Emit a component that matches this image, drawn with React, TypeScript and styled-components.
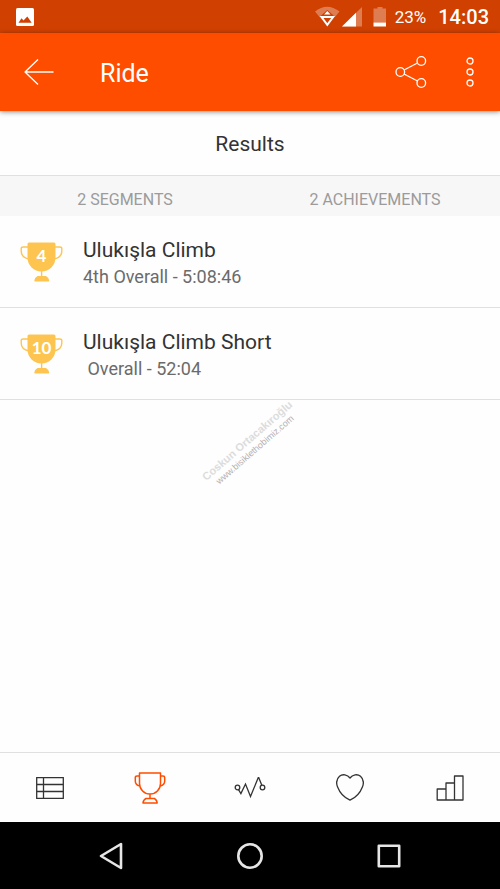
import React from "react";
import styled, { createGlobalStyle } from "styled-components";

const GlobalStyle = createGlobalStyle`
  *, *::before, *::after { box-sizing: border-box; }
  body { margin: 0; background: #fefefe; font-family: Roboto, "Liberation Sans", sans-serif; }
  h1, h2, h3, p, ul { margin: 0; padding: 0; font-weight: 400; }
  ul { list-style: none; }
  button { border: 0; padding: 0; background: none; font: inherit; color: inherit; cursor: pointer; }
  svg { display: block; flex: none; }
`;

const Screen = styled.div`
  display: flex;
  flex-direction: column;
  min-height: 100vh;
`;

const StatusBar = styled.div`
  display: flex;
  align-items: center;
  height: 33px;
  padding: 0 11px 0 16px;
  background: #d04000;
  color: #fff;
`;

const StatusIcons = styled.div`
  display: flex;
  align-items: center;
  margin-left: auto;
`;

const Battery = styled.span`
  margin-left: 8px;
  font-size: 17px;
  line-height: 20px;
`;

const Clock = styled.span`
  margin-left: 12px;
  font-size: 20px;
  font-weight: 500;
  line-height: 24px;
`;

const AppBar = styled.header`
  position: relative;
  display: flex;
  align-items: center;
  height: 78px;
  padding: 0 8px 0 17px;
  background: #ff4d00;
  color: #fff;
  box-shadow: 0 1px 5px rgba(0, 0, 0, 0.45);
`;

const BarButton = styled.button`
  display: flex;
  align-items: center;
  justify-content: center;
  width: 44px;
  height: 48px;
`;

const BarTitle = styled.h1`
  flex: 1;
  padding: 4px 0 0 39px;
  font-size: 25px;
  line-height: 32px;
`;

const BarActions = styled.div`
  display: flex;
  gap: 15px;
`;

const Content = styled.main`
  position: relative;
  flex: 1;
`;

const SectionTitle = styled.h2`
  height: 65px;
  border-bottom: 1px solid #e0e0e0;
  color: #333;
  font-size: 21px;
  line-height: 66px;
  text-align: center;
`;

const Summary = styled.div`
  display: grid;
  grid-template-columns: 1fr 1fr;
  height: 40px;
  background: #f7f7f7;
  color: #9b9b9b;
  font-size: 16px;
  line-height: 48px;
  text-align: center;
`;

const Row = styled.li`
  display: flex;
  align-items: flex-start;
  gap: 20px;
  padding: 20px 20px 18px;
  border-bottom: 1px solid #e0e0e0;
`;

const BadgeSlot = styled.div`
  padding-top: 6px;
`;

const RowTitle = styled.h3`
  color: #333;
  font-size: 21px;
  line-height: 28px;
`;

const RowDetail = styled.p`
  color: #6b6b6b;
  font-size: 18px;
  line-height: 25px;
  white-space: pre;
`;

const Watermark = styled.div`
  position: absolute;
  top: 333px;
  left: 50%;
  transform: translate(-50%, -50%) rotate(-41deg);
  text-align: center;
  white-space: nowrap;
  font-family: "Liberation Sans", sans-serif;
`;

const WatermarkName = styled.p`
  color: #dcdcdc;
  font-size: 11px;
  font-weight: 700;
  line-height: 16px;
`;

const WatermarkSite = styled.p`
  color: #b4b0b0;
  font-size: 9px;
  line-height: 9px;
`;

const TabBar = styled.nav`
  display: grid;
  grid-template-columns: repeat(5, 1fr);
  height: 70px;
  border-top: 1px solid #e0e0e0;
`;

const Tab = styled.button<{ $active?: boolean }>`
  display: flex;
  align-items: center;
  justify-content: center;
  color: ${(p) => (p.$active ? "#ff4d00" : "#333")};
`;

const SystemBar = styled.nav`
  display: flex;
  justify-content: center;
  gap: 91px;
  height: 67px;
  background: #000;
  color: #e6e6e6;
`;

const SystemButton = styled.button`
  display: flex;
  align-items: center;
  justify-content: center;
  width: 48px;
`;

const BadgeNumber = styled.text`
  fill: #fff;
  font-family: Lato, Roboto, sans-serif;
  font-size: 17px;
  font-weight: 700;
  text-anchor: middle;
`;

const Line = ({ w, h, stroke = 1.3, children }: { w: number; h: number; stroke?: number; children: React.ReactNode }) => (
  <svg width={w} height={h} viewBox={`0 0 ${w} ${h}`} fill="none" stroke="currentColor" strokeWidth={stroke} strokeLinejoin="round" aria-hidden="true">
    {children}
  </svg>
);

const TrophyBadge = ({ place }: { place: number }) => (
  <svg width="43" height="40" viewBox="0 0 43 40" role="img" aria-label={`Place ${place}`}>
    <path d="M8 5H3.2Q1.2 5 1.2 6.500V9Q1.200 15.500 9 17M35 5h4.800q2 0 2 1.500V9Q41.800 15.500 34 17" fill="none" stroke="#fdc550" strokeWidth="1.400" />
    <path d="M9 .5h25q1.500 0 1.500 1.500v13.500a14 14 0 0 1-28 0V2q0-1.500 1.500-1.500Z" fill="#fdc550" />
    <path d="M20.900 28h1.400v6h-1.400Z" fill="#fdc550" />
    <path d="M17.500 34h8.500q3 1.500 3.200 4.500.1 1-1 1H15.300q-1.100 0-1-1 .2-3 3.200-4.500Z" fill="#fdc550" />
    <BadgeNumber x="21.500" y="19.500">{place}</BadgeNumber>
  </svg>
);

const results = [
  { place: 4, title: "Ulukışla Climb", detail: "4th Overall - 5:08:46" },
  { place: 10, title: "Ulukışla Climb Short", detail: " Overall - 52:04" },
];

export default function App() {
  return (
    <>
      <GlobalStyle />
      <Screen>
        <StatusBar>
          <svg width="18" height="18" viewBox="0 0 18 18" aria-hidden="true">
            <rect width="18" height="18" rx="1.500" fill="#fff" />
            <path d="M2.500 14.700 5.500 10.300 7.500 12.500 11.300 8.500 15.700 14.700Z" fill="#d04000" />
          </svg>
          <StatusIcons>
            <svg width="72" height="22" viewBox="0 0 72 22" aria-hidden="true">
              <path d="M0 5.500Q12 -4 24.500 5.500L12.300 20.500Z" fill="#fff" opacity=".32" />
              <path d="m12.300 4 8 7-8 10-8-10Z" fill="#d04000" />
              <path d="M12.300 5 15.500 8.500H9.100Z" fill="#fff" />
              <path d="M6.500 11h11.600L12.300 18.800Z" fill="none" stroke="#fff" strokeWidth="2" />
              <path d="M47 1v19.500H27Z" fill="#fff" opacity=".32" />
              <path d="M41 6.800v13.700H27Z" fill="#fff" />
              <path d="M62.500 1h5v1.500H71v14H58.500v-14h4Z" fill="#fff" opacity=".32" />
              <path d="M58.500 16.500H71v4H58.500Z" fill="#fff" />
            </svg>
            <Battery>23%</Battery>
            <Clock>14:03</Clock>
          </StatusIcons>
        </StatusBar>
        <AppBar>
          <BarButton aria-label="Back">
            <Line w={30} h={28}><path d="M29.500 14H1M14 1.500 1 14l13 12.500" /></Line>
          </BarButton>
          <BarTitle>Ride</BarTitle>
          <BarActions>
            <BarButton aria-label="Share">
              <Line w={32} h={34}>
                <circle cx="5.300" cy="17" r="4.300" />
                <circle cx="26.300" cy="6" r="4.300" />
                <circle cx="26.300" cy="28" r="4.300" />
                <path d="m9 15 13.500-7M9 19l13.500 7" />
              </Line>
            </BarButton>
            <BarButton aria-label="More options">
              <Line w={8} h={30} stroke={1.3}>
                <circle cx="4" cy="4" r="3" />
                <circle cx="4" cy="15" r="3" />
                <circle cx="4" cy="26" r="3" />
              </Line>
            </BarButton>
          </BarActions>
        </AppBar>
        <Content>
          <SectionTitle>Results</SectionTitle>
          <Summary>
            <span>2 SEGMENTS</span>
            <span>2 ACHIEVEMENTS</span>
          </Summary>
          <ul>
            {results.map((r) => (
              <Row key={r.place}>
                <BadgeSlot>
                  <TrophyBadge place={r.place} />
                </BadgeSlot>
                <div>
                  <RowTitle>{r.title}</RowTitle>
                  <RowDetail>{r.detail}</RowDetail>
                </div>
              </Row>
            ))}
          </ul>
          <Watermark>
            <WatermarkName>Coskun Ortacakıroğlu</WatermarkName>
            <WatermarkSite>www.bisiklethobimiz.com</WatermarkSite>
          </Watermark>
        </Content>
        <TabBar aria-label="Activity sections">
          <Tab aria-label="Splits">
            <Line w={28} h={22}><path d="M.7.500h26.600v21H.7ZM.7 7.500h26.600M.7 14.500h26.600M7.500.500v21" /></Line>
          </Tab>
          <Tab $active aria-label="Results" aria-current="page">
            <Line w={32} h={32} stroke={1.5}>
              <path d="M5.500 1h21v10.500a10.500 10.500 0 0 1-21 0ZM5.500 4H3Q1.300 4 1.300 5.500V9Q1.300 13 5.800 14M26.500 4H29q1.700 0 1.700 1.500V9q0 4-4.500 5M16 22v4.500M12 26.500h8.500q2.500 1.500 2.700 4.500H9q.2-3 3-4.500Z" />
            </Line>
          </Tab>
          <Tab aria-label="Analysis">
            <Line w={32} h={22}>
              <circle cx="3.500" cy="10.500" r="2.300" />
              <circle cx="28.500" cy="10.500" r="2.300" />
              <path d="m4.500 12.600 2.400 4L11.500 7l5 12.500L24.500 0l3.300 8.300" strokeLinejoin="miter" />
            </Line>
          </Tab>
          <Tab aria-label="Heart rate">
            <Line w={28} h={27}>
              <path d="M14 4C11.500.5 6.500-.3 3.500 2.300.5 5 .2 9.500 1.600 13 3.500 18 8 23.500 14 26.200 20 23.500 24.500 18 26.400 13c1.400-3.500 1.100-8-1.900-10.700C21.500-.3 16.500.5 14 4Z" />
            </Line>
          </Tab>
          <Tab aria-label="Zones">
            <Line w={28} h={26}><path d="M1.200 25V14H10v11ZM10 25V8h8.500v17ZM18.500 25V1H27v24Z" /></Line>
          </Tab>
        </TabBar>
        <SystemBar aria-label="System navigation">
          <SystemButton aria-label="Back">
            <Line w={24} h={28} stroke={2.6}><path d="M22 2v24L2 14Z" /></Line>
          </SystemButton>
          <SystemButton aria-label="Home">
            <Line w={28} h={28} stroke={2.6}><circle cx="14" cy="14" r="11.700" /></Line>
          </SystemButton>
          <SystemButton aria-label="Recent apps">
            <Line w={24} h={24} stroke={2.6}><rect x="1.800" y="1.800" width="20.400" height="20.400" /></Line>
          </SystemButton>
        </SystemBar>
      </Screen>
    </>
  );
}
